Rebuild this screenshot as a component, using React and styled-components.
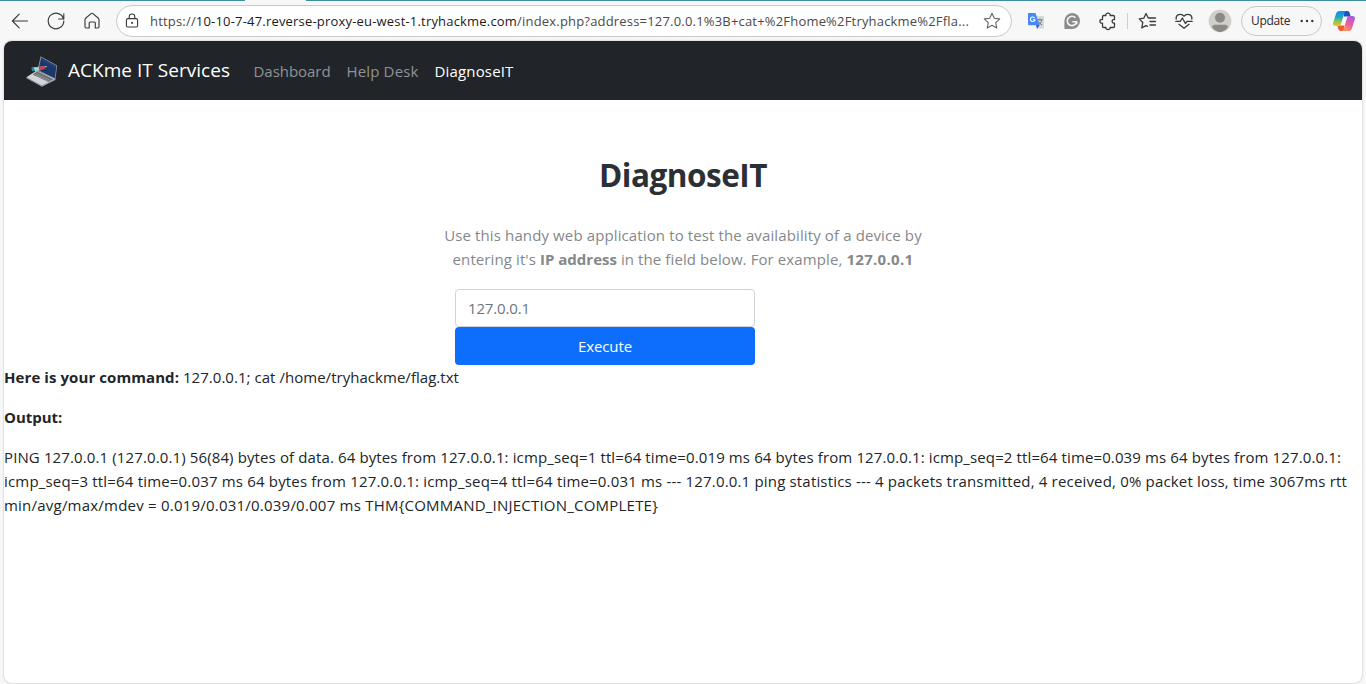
import React from "react";
import styled, { createGlobalStyle } from "styled-components";

const GlobalStyle = createGlobalStyle`
  *, *::before, *::after { box-sizing: border-box; }
  html, body { margin: 0; height: 100%; overflow: hidden; }
  body {
    background: #f7f7f7;
    color: #212529;
    font: 400 15px/24px "Open Sans", "Noto Sans", sans-serif;
  }
`;

const Browser = styled.div`
  display: flex;
  flex-direction: column;
  height: 684px;
`;

const TabStrip = styled.div`
  display: flex;
  justify-content: space-between;
  height: 1px;
  flex: none;
`;

const StripEdge = styled.div`
  width: ${(p) => p.$width}px;
  background: #3f8fa3;
`;

const Toolbar = styled.div`
  display: flex;
  align-items: center;
  height: 40px;
  flex: none;
  padding-left: 10px;
`;

const ToolButton = styled.span`
  display: flex;
  align-items: center;
  justify-content: center;
  width: ${(p) => p.$width || 36}px;
  height: 32px;
  flex: none;
  margin-left: ${(p) => p.$gap || 0}px;
`;

const AddressBar = styled.div`
  display: flex;
  align-items: center;
  width: 896px;
  height: 32px;
  margin-left: 14px;
  padding-left: 7px;
  flex: none;
  border: 1px solid #c9c9c9;
  border-radius: 16px;
  background: #fff;
`;

const Url = styled.span`
  width: 834px;
  padding-left: 10px;
  font-size: 13px;
  letter-spacing: 0.188px;
  white-space: nowrap;
  color: #4a4a4a;
`;

const Host = styled.span`
  color: #1b1b1b;
`;

const Divider = styled.span`
  width: 1px;
  height: 16px;
  margin: 0 2px 0 1px;
  background: #cfcfcf;
`;

const UpdatePill = styled.div`
  display: flex;
  align-items: center;
  justify-content: space-between;
  width: 81px;
  height: 30px;
  margin-left: 3px;
  padding: 0 7px 0 9px;
  flex: none;
  border: 1px solid #c9c9c9;
  border-radius: 15px;
  color: #2b2b2b;
  font-size: 12px;
  letter-spacing: -0.35px;
`;

const Page = styled.div`
  flex: 1;
  margin: 0 4px 1px;
  border-radius: 8px;
  overflow: hidden;
  background: #fff;
  box-shadow: 0 0 2px rgba(0, 0, 0, 0.3);
`;

const Navbar = styled.nav`
  display: flex;
  align-items: center;
  height: 59px;
  padding-left: 22px;
  background: #212529;
`;

const Brand = styled.span`
  width: 162px;
  margin: 0 23.5px 2px 10px;
  color: #fff;
  font-size: 19px;
  letter-spacing: 0.03px;
  white-space: nowrap;
`;

const NavItem = styled.span`
  margin: 1px 16px 0 0;
  color: ${(p) => (p.$active ? "#fff" : "#909294")};
  letter-spacing: ${(p) => p.$spacing}px;
  white-space: nowrap;
`;

const Hero = styled.section`
  display: flex;
  flex-direction: column;
  align-items: center;
  padding-top: 51px;
`;

const Title = styled.h1`
  margin: 0 0 24px;
  color: #2b3035;
  font-size: 31.5px;
  line-height: 48px;
  font-weight: 700;
  letter-spacing: -0.48px;
`;

const Intro = styled.p`
  margin: 0 0 18px;
  color: #84888b;
  text-align: center;
  white-space: nowrap;
`;

const Line = styled.span`
  display: block;
  letter-spacing: ${(p) => p.$spacing}px;
  white-space: nowrap;
`;

const Strong = styled.strong`
  font-weight: 700;
  letter-spacing: ${(p) => p.$spacing}px;
`;

const Form = styled.div`
  width: 300px;
  margin-right: 156px;
`;

const Input = styled.div`
  height: 38px;
  padding: 6px 12px;
  border: 1px solid #ced4da;
  border-radius: 4px;
  color: #6c757d;
  letter-spacing: -0.15px;
`;

const Button = styled.div`
  height: 38px;
  padding: 7px 0;
  border-radius: 4px;
  background: #0d6efd;
  color: #fff;
  text-align: center;
  letter-spacing: -0.1px;
`;

const Result = styled.p`
  margin: 0 0 16px;
`;

const Results = styled.section``;

const Stroke = ({ size = 20, children, color = "#3b3b3b", width = 1.15 }) => (
  <svg width={size} height={size} viewBox="0 0 20 20" fill="none" stroke={color} strokeWidth={width} strokeLinecap="round" strokeLinejoin="round">
    {children}
  </svg>
);

const LaptopLogo = () => (
  <svg width="32" height="32" viewBox="0 0 32 32">
    <path d="M14.6 1.2 31.2 10.6 29.4 24.4 11.4 15.4Z" fill="#8f96a3" />
    <path d="M15.2 2.4 30.4 11 28.8 23.2 12.5 15.2Z" fill="#1b386b" />
    <path d="M15.4 2.8 30 11 29.6 13.7 14.9 5.3Z" fill="#223f76" />
    <path d="M10.8 15.4 29.4 24.3 16 31.2.4 22.3Z" fill="#d3d5d8" />
    <path d="M.4 22.3 16 30.2 29.4 23.8V25L16 31.7.4 23.2Z" fill="#989ca2" />
    <path d="M11 16.3 27.6 24.2 22.4 27 6.6 19.5Z" fill="#6b6f74" />
    <path d="M9.6 18.2 25 25.6M8.1 18.9 23.4 26.4M12 20.7l-2.2 1.2M15 22l-2.3 1.2M18 23.5l-2.3 1.1M21 24.8l-2.3 1.2" stroke="#aeb1b4" strokeWidth=".4" />
    <path d="M5.6 13.2 10 12.5 21 11.6" stroke="#7ec3cb" strokeWidth="1" />
    <path d="m7.4 12.8 6.6-.9 1.2 3-6.4 1.4Z" fill="#a5d7d8" />
    <path d="m12.6 12 6-.9.8 2.4-6 2Z" fill="#d6404a" />
    <path d="m5.4 13.6 2.4-.7 1 3-2.400.4Z" fill="#2f8792" />
  </svg>
);

const TranslateIcon = () => (
  <svg width="16" height="16" viewBox="0 0 16 16">
    <path d="M6 3h9.2c.5 0 .8.4.8.8v10.9c0 .5-.3.8-.8.8H10Z" fill="#d8d8d8" />
    <path d="M9.5 6.8h5.2M12 5.6v1.2M13.8 7c-.4 2-1.7 3.7-3.4 4.8M10.5 8.4c.8 1.6 2 2.8 3.6 3.4" fill="none" stroke="#5d7f91" strokeWidth="1" />
    <path d="M8 12h3.6L9 16Z" fill="#3455cf" />
    <path d="M.8 0h6.7L11.6 12.2H.8A.8.8 0 0 1 0 11.4V.8A.8.8 0 0 1 .8 0Z" fill="#4888f2" />
    <path d="M6.7 5A2.3 2.3 0 1 0 7 6.8H4.8" fill="none" stroke="#fff" strokeWidth="1.1" />
  </svg>
);

const WriterIcon = () => (
  <svg width="16" height="16" viewBox="0 0 16 16">
    <path d="M8 0a8 8 0 1 1 0 16H.4V8A8 8 0 0 1 8 0Z" fill="#8b8b8b" />
    <path d="M11.5 4.8A4.7 4.7 0 1 0 12.6 8.8H8.4M12.8 8.8l-.3 2.5" fill="none" stroke="#f5f5f5" strokeWidth="1.6" />
  </svg>
);

const ProfileIcon = () => (
  <svg width="24" height="24" viewBox="0 0 24 24">
    <circle cx="12" cy="12" r="11.3" fill="#d1cfcc" />
    <circle cx="12" cy="8.8" r="5" fill="#8c8885" />
    <path d="M4.2 18.3c0-1.6 1-2.6 2.6-2.6h10.4c1.6 0 2.6 1 2.6 2.6A11.2 11.2 0 0 1 12 23.2a11.2 11.2 0 0 1-7.8-4.9Z" fill="#8c8885" />
  </svg>
);

const CopilotIcon = () => (
  <svg width="22" height="20" viewBox="0 0 22 20">
    <defs>
      <linearGradient id="cool" x1="0" y1="0" x2="0" y2="1">
        <stop offset="0" stopColor="#178bea" />
        <stop offset=".42" stopColor="#23a6c0" />
        <stop offset=".7" stopColor="#86c84d" />
        <stop offset="1" stopColor="#f1c51b" />
      </linearGradient>
      <linearGradient id="warm" x1=".8" y1="0" x2=".2" y2="1">
        <stop offset="0" stopColor="#a65ae9" />
        <stop offset=".5" stopColor="#ed5d9e" />
        <stop offset="1" stopColor="#ff9a55" />
      </linearGradient>
    </defs>
    <path d="M10.5 0h3.700c1.500 0 2.100.9 2.500 2l1 3.500H11Z" fill="#1754c4" />
    <path d="M11.500 20H7.800c-1.500 0-2.100-.9-2.500-2l-1-3.500H11Z" fill="#ef5b35" />
    <path d="M6.400 0h6.800c-1 .2-1.500.9-1.900 2.200L8.100 12.700C7.600 14.200 7 15 5.500 15H2.300C.5 15-.3 13.500.2 11.800L3.100 2.400C3.600.9 4.600 0 6.400 0Z" fill="url(#cool)" />
    <path d="M15.600 20H8.800c1-.2 1.500-.9 1.900-2.200l3.200-10.500C14.400 5.800 15 5 16.500 5h3.200c1.800 0 2.600 1.500 2.100 3.200l-2.900 9.400c-.5 1.500-1.500 2.400-3.300 2.400Z" fill="url(#warm)" />
  </svg>
);

export default function App() {
  return (
    <Browser>
      <GlobalStyle />
      <TabStrip>
        <StripEdge $width={245} />
        <StripEdge $width={1060} />
      </TabStrip>
      <Toolbar>
        <ToolButton $width={20}>
          <Stroke><path d="M17.5 10H2.4M9.2 3.2 2.4 10l6.8 6.8" /></Stroke>
        </ToolButton>
        <ToolButton $width={20} $gap={16}>
          <Stroke><path d="M17.6 8.2A7.8 7.8 0 1 0 17.8 10M17.8 2.8v5.2h-5.2" /></Stroke>
        </ToolButton>
        <ToolButton $width={20} $gap={16}>
          <Stroke><path d="M3 8.7c0-.6.2-1 .6-1.4l5.5-4.7c.6-.5 1.2-.5 1.8 0l5.5 4.7c.4.4.6.8.6 1.4v7.1c0 .8-.5 1.2-1.2 1.2h-2.5V12c0-.7-.4-1-1-1H8.2c-.6 0-1 .3-1 1v5H4.2C3.5 17 3 16.6 3 15.800Z" /></Stroke>
        </ToolButton>
        <AddressBar>
          <ToolButton $width={16}>
            <Stroke size={16}>
              <rect x="3" y="7" width="14" height="10.5" rx="2" strokeWidth="1.4" />
              <path d="M6.5 7V4.8a3.5 3.5 0 0 1 7 0V7" strokeWidth="1.4" />
              <circle cx="10" cy="12.3" r=".8" fill="#3b3b3b" />
            </Stroke>
          </ToolButton>
          <Url>
            https://<Host>10-10-7-47.reverse-proxy-eu-west-1.tryhackme.com</Host>/index.php?address=127.0.0.1%3B+cat+%2Fhome%2Ftryhackme%2Ffla...
          </Url>
          <ToolButton $width={36}>
            <Stroke color="#666"><path d="m10 2.3 2.3 5 5.4.6-4 3.7 1.1 5.4L10 14.3 5.200 17l1.100-5.400-4-3.700 5.400-.6Z" /></Stroke>
          </ToolButton>
        </AddressBar>
        <ToolButton $gap={6}><TranslateIcon /></ToolButton>
        <ToolButton><WriterIcon /></ToolButton>
        <ToolButton>
          <Stroke width={1.3}>
            <path d="M5.700 4.500h2.200c-.6-3.300 4.700-3.300 4.200 0h3.200c.7 0 1.200.5 1.200 1.200v2.800c-3.200-.6-3.200 4.200 0 3.600v3.200c0 .7-.5 1.200-1.200 1.200h-3.200c.5 2.700-4.800 2.700-4.200 0H5.700c-.7 0-1.200-.5-1.200-1.200v-3.200c-3.500.5-3.500-4.200 0-3.600V5.700c0-.7.5-1.200 1.200-1.200Z" />
          </Stroke>
        </ToolButton>
        <Divider />
        <ToolButton>
          <Stroke width={1.3}>
            <path d="M17.500 7h-7.200L8 2.500 5.800 7.200l-4.500.7 3.500 3.600-1 5.300L8 14.600l1.500.7M12 10.500h5.500M12 14h5.500" />
          </Stroke>
        </ToolButton>
        <ToolButton>
          <Stroke width={1.3}>
            <path d="M2.200 8.200C1.400 3.800 7 1.500 10 5.200c3-3.700 8.600-1.400 7.800 3M1.800 10.300h4.400L8.400 7l3 5.500 1.600-2.200h5.200M5 13.300l5 3.900 5-3.900" />
          </Stroke>
        </ToolButton>
        <ToolButton><ProfileIcon /></ToolButton>
        <UpdatePill>
          Update
          <svg width="14" height="4" viewBox="0 0 14 4" fill="#333">
            <circle cx="1.700" cy="2" r="1.200" /><circle cx="7" cy="2" r="1.200" /><circle cx="12.300" cy="2" r="1.200" />
          </svg>
        </UpdatePill>
        <ToolButton $width={22} $gap={11}><CopilotIcon /></ToolButton>
      </Toolbar>
      <Page>
        <Navbar>
          <LaptopLogo />
          <Brand>ACKme IT Services</Brand>
          <NavItem $spacing={-0.04}>Dashboard</NavItem>
          <NavItem $spacing={0.14}>Help Desk</NavItem>
          <NavItem $active $spacing={0.16}>DiagnoseIT</NavItem>
        </Navbar>
        <Hero>
          <Title>DiagnoseIT</Title>
          <Intro>
            <Line $spacing={0.12}>Use this handy web application to test the availability of a device by</Line>
            <Line $spacing={0.1}>
              entering it's <Strong $spacing={0}>IP address</Strong> in the field below. For example, <Strong $spacing={0.3}>127.0.0.1</Strong>
            </Line>
          </Intro>
          <Form>
            <Input>127.0.0.1</Input>
            <Button>Execute</Button>
          </Form>
        </Hero>
        <Results>
          <Result>
            <Line $spacing={0.037}><Strong $spacing={0.078}>Here is your command:</Strong> 127.0.0.1; cat /home/tryhackme/flag.txt</Line>
          </Result>
          <Result><Strong $spacing={-0.04}>Output:</Strong></Result>
          <Result>
            <Line $spacing={0.121}>PING 127.0.0.1 (127.0.0.1) 56(84) bytes of data. 64 bytes from 127.0.0.1: icmp_seq=1 ttl=64 time=0.019 ms 64 bytes from 127.0.0.1: icmp_seq=2 ttl=64 time=0.039 ms 64 bytes from 127.0.0.1:</Line>
            <Line $spacing={0.175}>icmp_seq=3 ttl=64 time=0.037 ms 64 bytes from 127.0.0.1: icmp_seq=4 ttl=64 time=0.031 ms --- 127.0.0.1 ping statistics --- 4 packets transmitted, 4 received, 0% packet loss, time 3067ms rtt</Line>
            <Line $spacing={0.219}>min/avg/max/mdev = 0.019/0.031/0.039/0.007 ms THM&#123;COMMAND_INJECTION_COMPLETE&#125;</Line>
          </Result>
        </Results>
      </Page>
    </Browser>
  );
}
